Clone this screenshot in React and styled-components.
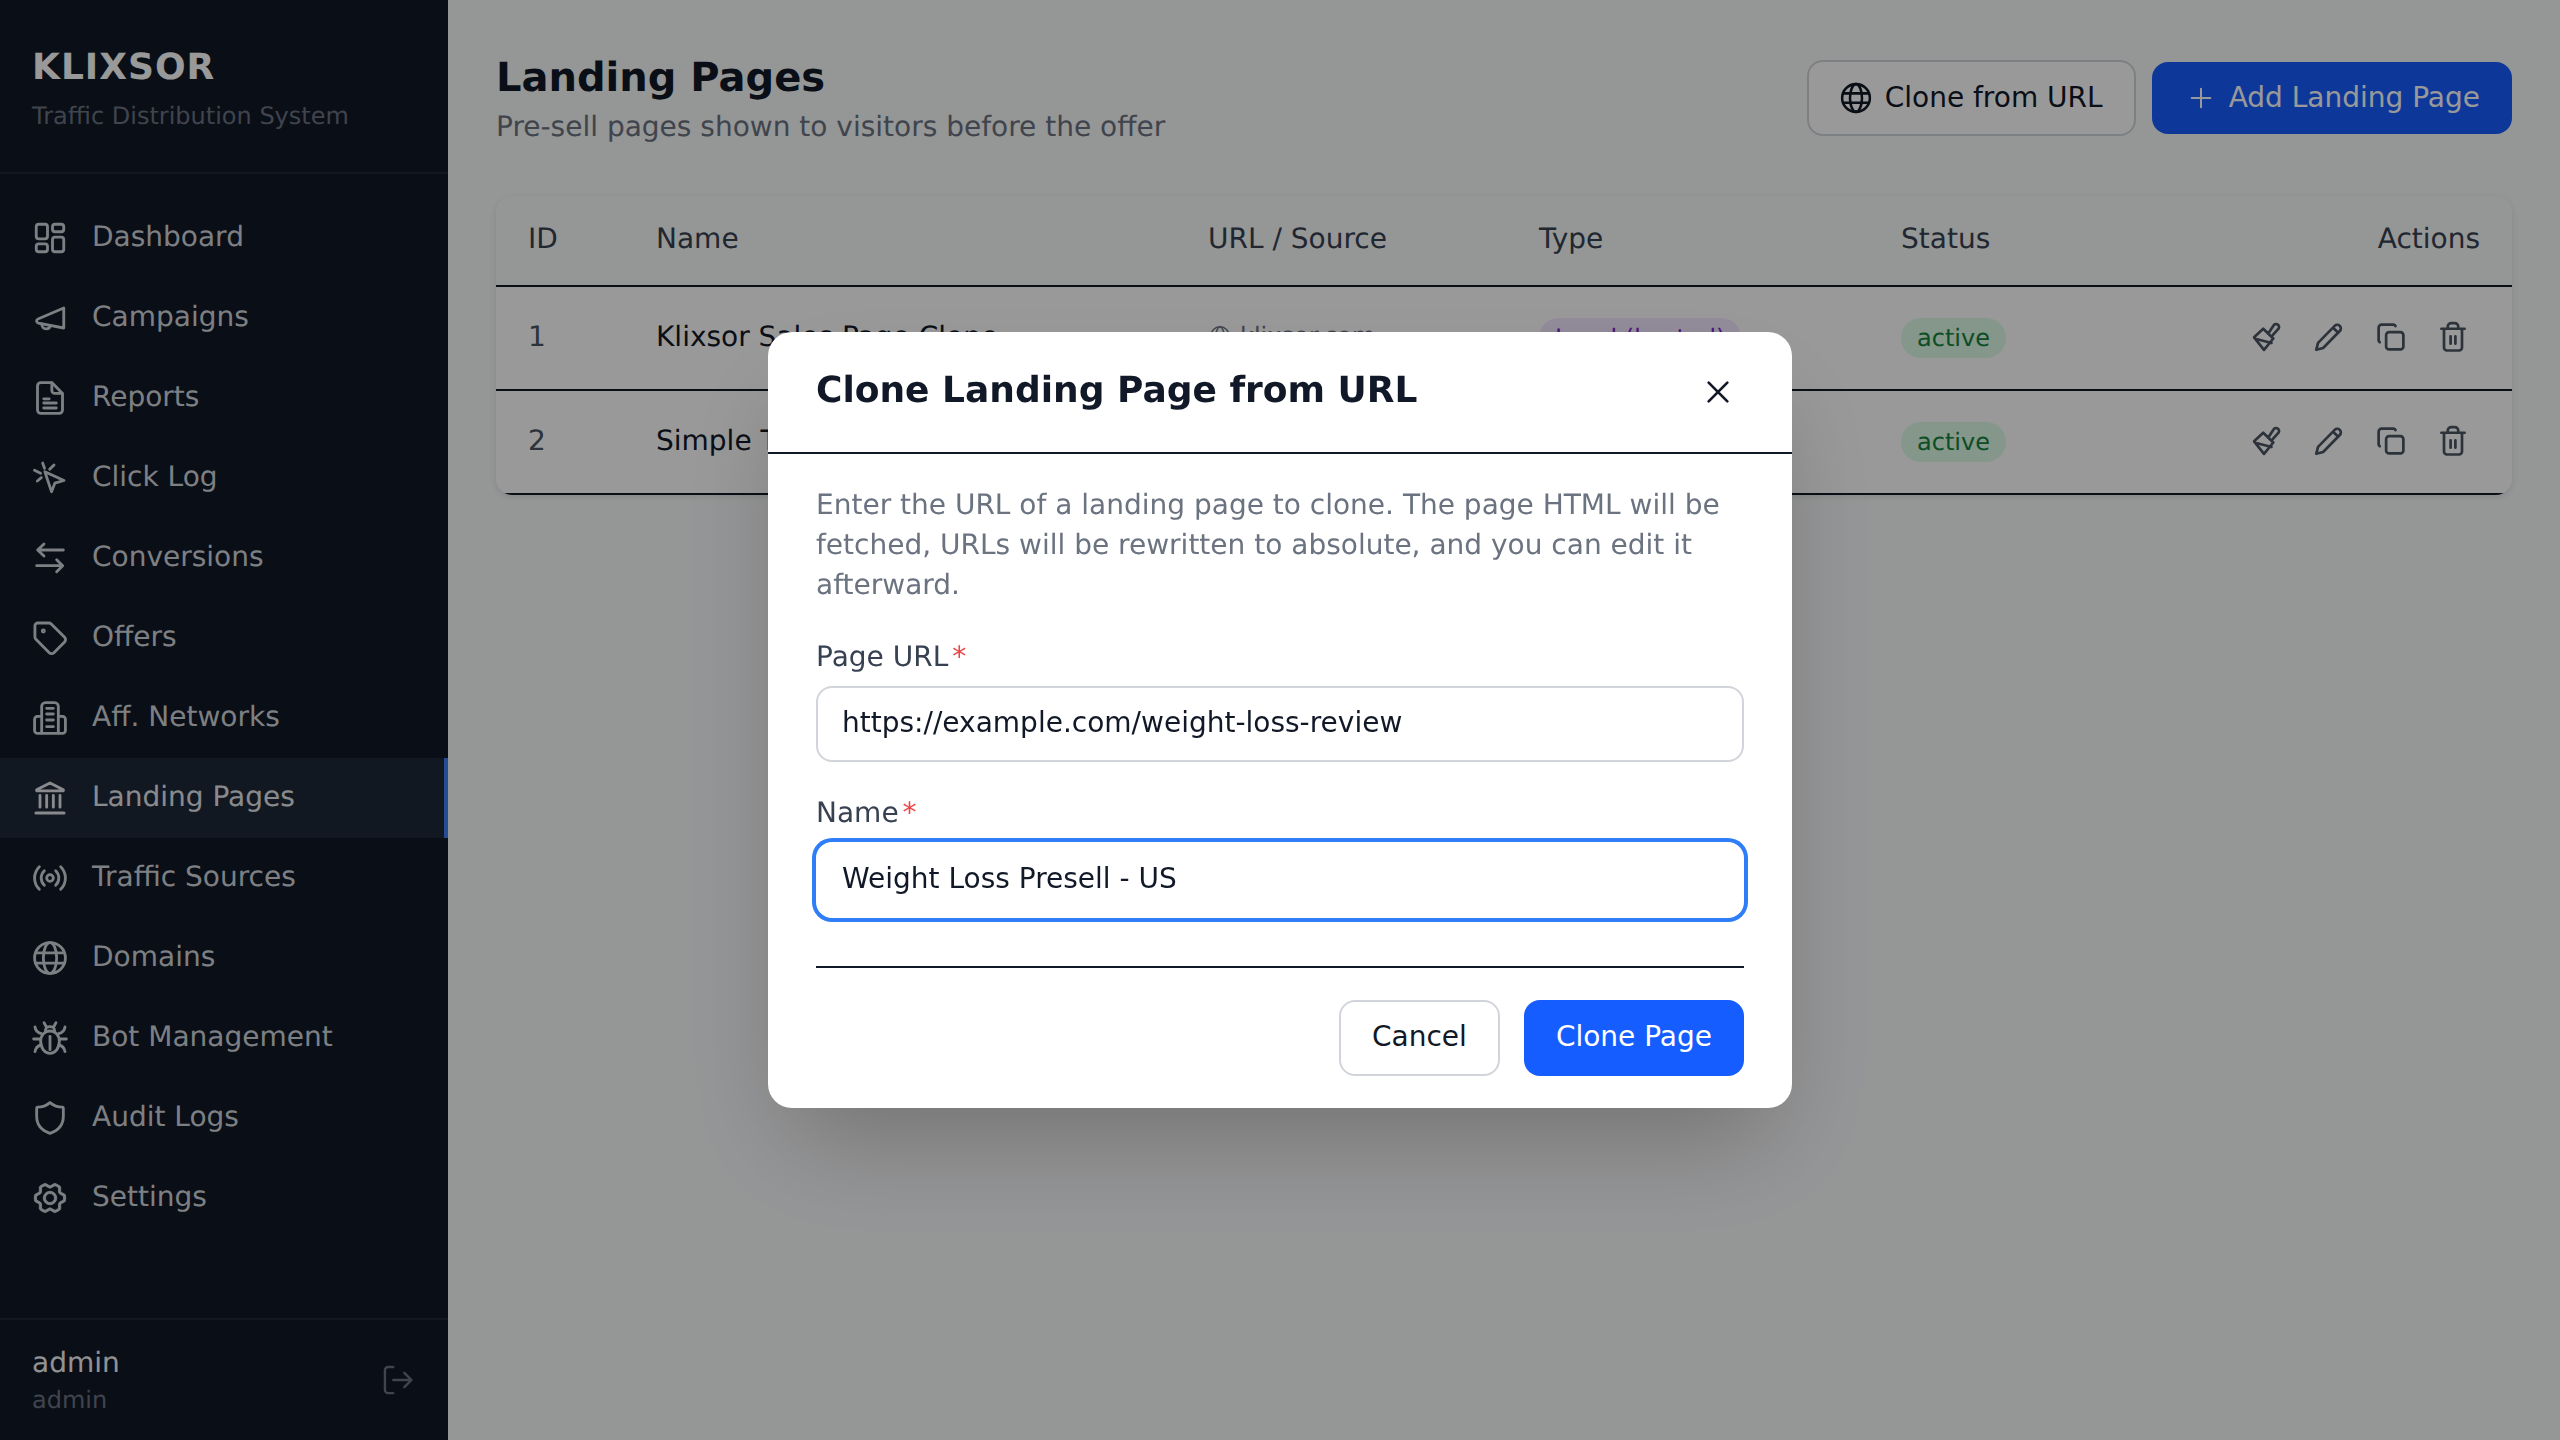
import styled, { createGlobalStyle } from "styled-components";
import { PiGearSix } from "react-icons/pi";

const GlobalStyle = createGlobalStyle`
  html, body {
    margin: 0;
    padding: 0;
    height: 100%;
    background: #f9fafb;
  }
  body {
    font-family: "DejaVu Sans", "Liberation Sans", sans-serif;
    font-size: 28px;
    text-rendering: geometricPrecision;
    color: #111827;
  }
  * {
    box-sizing: border-box;
  }
`;

// icons are drawn on a 24 unit grid, stroke only
const Glyph = styled.svg`
  width: ${(p) => p.$size || 40}px;
  height: ${(p) => p.$size || 40}px;
  flex: none;
  fill: none;
  stroke: currentColor;
  stroke-width: ${(p) => p.$stroke || 1.7};
  stroke-linecap: round;
  stroke-linejoin: round;
`;

const Icon = ({ name, size, stroke }) => (
  <Glyph viewBox="0 0 24 24" $size={size} $stroke={stroke}>
    {paths[name]}
  </Glyph>
);

const paths = {
  board: (
    <>
      <rect x="3.75" y="3.75" width="6.75" height="8.75" rx="1.5" />
      <rect x="13.5" y="3.75" width="6.75" height="4.5" rx="1.5" />
      <rect x="3.75" y="15.5" width="6.75" height="4.75" rx="1.5" />
      <rect x="13.5" y="11.5" width="6.75" height="8.75" rx="1.5" />
    </>
  ),
  megaphone: (
    <>
      <path d="M20.25 6v12L5 15.1c-1.3-.3-1.4-2-.2-2.5z" />
      <path d="M7 15.6c.1 1.7 1.2 2.9 2.7 2.9 1.3 0 2.3-.9 2.5-2" />
    </>
  ),
  report: (
    <>
      <path d="M6.5 2.75h6.6l6.4 6.6v9.9a2 2 0 0 1-2 2h-11a2 2 0 0 1-2-2V4.75a2 2 0 0 1 2-2z" />
      <path d="M13.1 3v4.5a1.75 1.75 0 0 0 1.75 1.75h4.4" />
      <path d="M8.25 12.5h3.25M8.25 15h7.5M8.25 18h7.5" />
    </>
  ),
  click: (
    <>
      <path d="M8.9 8.2l11.5 5.3-5.5 1.6-2 5.1z" />
      <path d="M7.6 3l1.1 3.2M14.4 4.2l-2.6 2.6M2.7 7.4l3.6 1.8M4.4 13.8l2.4-2" />
    </>
  ),
  swap: (
    <path d="M20 7.2H4.6M8.4 3.6L4.6 7.2l3.8 3.6M4 16.6h15.4M16 13l3.6 3.6-3.6 3.6" />
  ),
  tag: (
    <>
      <path d="M4.75 3h6.6a2 2 0 0 1 1.4.6l8 8a2 2 0 0 1 0 2.8l-6.4 6.4a2 2 0 0 1-2.8 0l-8-8a2 2 0 0 1-.6-1.4V4.75A1.75 1.75 0 0 1 4.75 3z" />
      <circle cx="8" cy="7.8" r=".6" />
    </>
  ),
  building: (
    <>
      <path d="M7 21V5a2.25 2.25 0 0 1 2.25-2.25h5.5A2.25 2.25 0 0 1 17 5v16" />
      <path d="M7 11H4.5a1.75 1.75 0 0 0-1.75 1.75v6.75A1.75 1.75 0 0 0 4.5 21.25h15a1.75 1.75 0 0 0 1.75-1.75v-6.75A1.75 1.75 0 0 0 19.5 11H17" />
      <path d="M10 6.2h4M10 9.6h4M10 13.2h4M10 17.2h4" />
    </>
  ),
  bank: (
    <>
      <path d="M12 3l8 4.1v.6H4v-.6z" />
      <path d="M6 10.5v7M10 10.5v7M14 10.5v7M18 10.5v7" />
      <path d="M3.6 21h16.8" strokeWidth="1.9" />
    </>
  ),
  radio: (
    <>
      <circle cx="12" cy="12" r="2" />
      <path d="M8.6 7.6C6.1 10 6.1 14 8.6 16.4M5.6 5.2C1.8 9 1.8 15 5.6 18.8M15.4 7.6c2.5 2.4 2.5 6.4 0 8.8M18.4 5.2c3.8 3.8 3.8 9.8 0 13.6" />
    </>
  ),
  globe: (
    <>
      <circle cx="12" cy="12" r="9.25" />
      <ellipse cx="12" cy="12" rx="4" ry="9.25" />
      <path d="M3.4 8.9h17.2M3.4 15.1h17.2" />
    </>
  ),
  bug: (
    <>
      <path d="M12 7.8c-3.2 0-5.6 2.6-5.6 6.2 0 4 2.4 7.2 5.6 7.2s5.6-3.2 5.6-7.2c0-3.6-2.4-6.2-5.6-6.2z" />
      <path d="M12 11v8" />
      <path d="M8.4 2.8l1.4 2.6M15.6 2.8l-1.4 2.6M9.3 7.9v-.5c0-1.3 1.2-2.2 2.7-2.2s2.7.9 2.7 2.2v.5" />
      <path d="M2.2 12.6h4.2M21.8 12.6h-4.2M3 5.4c.3 2.2 1.5 3.5 3.8 4M21 5.4c-.3 2.2-1.5 3.5-3.8 4M3 20.2c.3-2.2 1.5-3.5 3.7-4M21 20.2c-.3-2.2-1.5-3.5-3.7-4" />
    </>
  ),
  shield: (
    <path d="M12 2.75c2.2 1.85 4.7 2.75 7.4 2.75a.6.6 0 0 1 .6.6V11c0 5-2.6 8.4-8 10.2C6.6 19.4 4 16 4 11V6.1a.6.6 0 0 1 .6-.6C7.3 5.5 9.8 4.6 12 2.75z" />
  ),
  logout: (
    <path d="M9 20.25H5.75a2 2 0 0 1-2-2V5.75a2 2 0 0 1 2-2H9M16 16.5l4.5-4.5L16 7.5M20.5 12H9" />
  ),
  plus: <path d="M12 5v14M5 12h14" />,
  close: <path d="M5 5l14 14M19 5L5 19" />,
  brush: (
    <>
      <path d="M9.5 6.5l-6.1 5.7 6.6 8.4 6.2-7.6z" />
      <path d="M5.5 13.5l9.5 2.5" />
      <path d="M13.5 8.6l3-4.4a1.8 1.8 0 0 1 3.2 2.2l-3.9 4.3" />
    </>
  ),
  pencil: (
    <path d="M3.5 20.5l1.2-4.6L15.8 4.6a2.4 2.4 0 0 1 3.4 3.4L8.1 19.3zM14.9 6l3.1 3" />
  ),
  copy: (
    <>
      <rect x="8.75" y="8.75" width="11.5" height="11.5" rx="2" />
      <path d="M4.5 15.5a1.75 1.75 0 0 1-.75-1.5V5.75a2 2 0 0 1 2-2h7.75a1.75 1.75 0 0 1 1.5.9" />
    </>
  ),
  trash: (
    <path d="M4.25 6.5h15.5M6 6.5V19a2 2 0 0 0 2 2h8a2 2 0 0 0 2-2V6.5M8.5 6.5V5a2.25 2.25 0 0 1 2.25-2.25h2.5A2.25 2.25 0 0 1 15.5 5v1.5M10.4 11.5v5M13.6 11.5v5" />
  ),
};

const NAV = [
  { label: "Dashboard", icon: "board" },
  { label: "Campaigns", icon: "megaphone" },
  { label: "Reports", icon: "report" },
  { label: "Click Log", icon: "click" },
  { label: "Conversions", icon: "swap" },
  { label: "Offers", icon: "tag" },
  { label: "Aff. Networks", icon: "building" },
  { label: "Landing Pages", icon: "bank", active: true },
  { label: "Traffic Sources", icon: "radio" },
  { label: "Domains", icon: "globe" },
  { label: "Bot Management", icon: "bug" },
  { label: "Audit Logs", icon: "shield" },
  { label: "Settings", icon: "gear" },
];

const ROWS = [
  { id: 1, name: "Klixsor Sales Page Clone", url: "klixsor.com", type: "Local (hosted)" },
  { id: 2, name: "Simple Test Page", url: "klixsor.com", type: "Local (hosted)" },
];

export default function App() {
  return (
    <>
      <GlobalStyle />
      <Shell>
        <Sidebar>
          <Brand>
            <BrandName>KLIXSOR</BrandName>
            <BrandSub>Traffic Distribution System</BrandSub>
          </Brand>
          <Nav>
            {NAV.map((item) => (
              <NavItem key={item.label} $active={item.active}>
                {item.icon === "gear" ? <GearIcon /> : <Icon name={item.icon} />}
                <NavLabel>{item.label}</NavLabel>
              </NavItem>
            ))}
          </Nav>
          <UserBar>
            <div>
              <UserName>admin</UserName>
              <UserRole>admin</UserRole>
            </div>
            <LogoutButton>
              <Icon name="logout" size={38} stroke={1.5} />
            </LogoutButton>
          </UserBar>
        </Sidebar>

        <Main>
          <PageHeader>
            <div>
              <PageTitle>Landing Pages</PageTitle>
              <PageSub>Pre-sell pages shown to visitors before the offer</PageSub>
            </div>
            <HeaderActions>
              <OutlineButton>
                <Icon name="globe" size={36} />
                Clone from URL
              </OutlineButton>
              <PrimaryButton>
                <Icon name="plus" size={32} stroke={1.5} />
                Add Landing Page
              </PrimaryButton>
            </HeaderActions>
          </PageHeader>

          <Card>
            <Table>
              <thead>
                <tr>
                  <Th $w={128}>ID</Th>
                  <Th $w={552}>Name</Th>
                  <Th $w={331}>URL / Source</Th>
                  <Th $w={362}>Type</Th>
                  <Th $w={300}>Status</Th>
                  <Th $right>Actions</Th>
                </tr>
              </thead>
              <tbody>
                {ROWS.map((row) => (
                  <tr key={row.id}>
                    <IdCell>{row.id}</IdCell>
                    <TextCell>{row.name}</TextCell>
                    <Td>
                      <UrlLink>
                        <Icon name="globe" size={24} stroke={1.5} />
                        {row.url}
                      </UrlLink>
                    </Td>
                    <Td>
                      <Badge $kind="purple">{row.type}</Badge>
                    </Td>
                    <Td>
                      <Badge $kind="green">active</Badge>
                    </Td>
                    <TextCell>
                      <RowActions>
                        {["brush", "pencil", "copy", "trash"].map((name) => (
                          <ActionButton key={name}>
                            <Icon name={name} size={36} stroke={1.8} />
                          </ActionButton>
                        ))}
                      </RowActions>
                    </TextCell>
                  </tr>
                ))}
              </tbody>
            </Table>
          </Card>
        </Main>
      </Shell>

      <Overlay>
        <Modal>
          <ModalHeader>
            <ModalTitle>Clone Landing Page from URL</ModalTitle>
            <CloseButton>
              <Icon name="close" size={32} stroke={2} />
            </CloseButton>
          </ModalHeader>
          <ModalBody>
            <Hint>
              Enter the URL of a landing page to clone. The page HTML will be
              fetched, URLs will be rewritten to absolute, and you can edit it
              afterward.
            </Hint>
            <Field>
              <Label>
                Page URL<Req>*</Req>
              </Label>
              <TextInput readOnly value="https://example.com/weight-loss-review" />
            </Field>
            <Field>
              <Label>
                Name<Req>*</Req>
              </Label>
              <TextInput $focused readOnly value="Weight Loss Presell - US" />
            </Field>
            <ModalFooter>
              <CancelButton>Cancel</CancelButton>
              <SubmitButton>Clone Page</SubmitButton>
            </ModalFooter>
          </ModalBody>
        </Modal>
      </Overlay>
    </>
  );
}

const GearIcon = styled(PiGearSix)`
  width: 36px;
  height: 36px;
  margin: 0 2px;
  flex: none;
  stroke-width: 6px;
`;

const Shell = styled.div`
  display: flex;
  min-height: 100vh;
`;

const Sidebar = styled.aside`
  width: 448px;
  flex: none;
  height: 100vh;
  background: #111827;
  display: flex;
  flex-direction: column;
`;

const Brand = styled.div`
  padding: 40px 32px 39px;
  border-bottom: 2px solid #1f2937;
`;

const BrandName = styled.div`
  font-size: 36px;
  line-height: 56px;
  font-weight: 700;
  letter-spacing: 1px;
  color: #fff;
`;

const BrandSub = styled.div`
  margin-top: 3px;
  font-size: 24px;
  line-height: 34px;
  color: #6b7280;
`;

const Nav = styled.nav`
  flex: 1;
  padding-top: 24px;
`;

const NavItem = styled.a`
  height: 80px;
  padding-left: 30px;
  display: flex;
  align-items: center;
  gap: 22px;
  color: ${(p) => (p.$active ? "#e5e7eb" : "#d1d5db")};
  background: ${(p) => (p.$active ? "#1f2937" : "transparent")};
  border-right: 4px solid ${(p) => (p.$active ? "#3b82f6" : "transparent")};
`;

const NavLabel = styled.span`
  padding-bottom: 3px;
`;

const UserBar = styled.div`
  border-top: 2px solid #1f2937;
  padding: 24px 32px;
  display: flex;
  align-items: center;
  justify-content: space-between;
`;

const UserName = styled.div`
  line-height: 38px;
  margin-bottom: 2px;
  color: #f3f4f6;
`;

const UserRole = styled.div`
  font-size: 24px;
  line-height: 32px;
  color: #6b7280;
`;

const LogoutButton = styled.button`
  border: 0;
  padding: 0;
  margin-right: -1px;
  background: none;
  display: flex;
  color: #6b7280;
`;

const Main = styled.main`
  flex: 1;
  min-width: 0;
  padding: 48px;
`;

const PageHeader = styled.header`
  display: flex;
  align-items: center;
  justify-content: space-between;
  margin-bottom: 49px;
`;

const PageTitle = styled.h1`
  margin: 0;
  font-size: 40px;
  line-height: 60px;
  font-weight: 700;
`;

const PageSub = styled.p`
  margin: -1px 0 0;
  line-height: 40px;
  color: #6b7280;
`;

const HeaderActions = styled.div`
  display: flex;
  align-items: center;
  gap: 16px;
`;

const OutlineButton = styled.button`
  height: 76px;
  padding: 0 31px 0 29px;
  border: 2px solid #d1d5db;
  border-radius: 16px;
  background: #fff;
  color: #111827;
  font: inherit;
  display: flex;
  align-items: center;
  gap: 11px;
`;

const PrimaryButton = styled.button`
  height: 72px;
  padding: 0 32px 0 33px;
  border: 0;
  border-radius: 16px;
  background: #165dff;
  color: #fff;
  font: inherit;
  display: flex;
  align-items: center;
  gap: 12px;
`;

const Card = styled.section`
  background: #fff;
  border-radius: 16px;
  overflow: hidden;
  box-shadow: 0 2px 6px rgba(0, 0, 0, 0.1);
`;

const Table = styled.table`
  width: 100%;
  table-layout: fixed;
  border-collapse: collapse;

  tbody tr {
    height: 104px;
    border-bottom: 2px solid #111827;
  }
`;

const Th = styled.th`
  height: 90px;
  width: ${(p) => (p.$w ? `${p.$w}px` : "auto")};
  padding: 0 32px 5px;
  background: #f9fafb;
  border-bottom: 2px solid #111827;
  font-weight: 400;
  color: #374151;
  text-align: ${(p) => (p.$right ? "right" : "left")};
`;

const Td = styled.td`
  padding: 0 32px;
  white-space: nowrap;
`;

const TextCell = styled(Td)`
  padding-bottom: 3px;
`;

const IdCell = styled(TextCell)`
  color: #4b5563;
`;

const UrlLink = styled.span`
  display: inline-flex;
  align-items: center;
  gap: 8px;
  font-size: 24px;
  color: #6b7280;
`;

const Badge = styled.span`
  display: inline-block;
  padding: 0 16px;
  font-size: 24px;
  line-height: 40px;
  border-radius: 20px;
  background: ${(p) => (p.$kind === "purple" ? "#f3e8ff" : "#dcfce7")};
  color: ${(p) => (p.$kind === "purple" ? "#7e22ce" : "#15803d")};
`;

const RowActions = styled.div`
  display: flex;
  justify-content: flex-end;
  gap: 10px;
  margin-right: 1px;
`;

const ActionButton = styled.button`
  width: 52px;
  height: 52px;
  border: 0;
  background: none;
  padding: 8px;
  color: #4b5563;
  display: flex;
`;

const Overlay = styled.div`
  position: fixed;
  inset: 0;
  background: rgba(0, 0, 0, 0.4);
  display: flex;
  align-items: center;
  justify-content: center;
`;

const Modal = styled.div`
  width: 1024px;
  height: 776px;
  background: #fff;
  border-radius: 24px;
  box-shadow: 0 50px 100px -24px rgba(0, 0, 0, 0.25);
`;

const ModalHeader = styled.div`
  height: 122px;
  padding: 0 48px;
  border-bottom: 2px solid #111827;
  display: flex;
  align-items: center;
  justify-content: space-between;
`;

const ModalTitle = styled.h2`
  margin: 0 0 4px;
  font-size: 36px;
  font-weight: 700;
  color: #111827;
`;

const CloseButton = styled.button`
  border: 0;
  padding: 0;
  background: none;
  display: flex;
  color: #111827;
  margin-right: 10px;
`;

const ModalBody = styled.div`
  padding: 31px 48px 32px;
`;

const Hint = styled.p`
  margin: 0 0 32px;
  line-height: 40px;
  color: #6b7280;
`;

const Field = styled.div`
  margin-bottom: 31px;
`;

const Label = styled.label`
  display: block;
  line-height: 40px;
  margin-bottom: 9px;
  color: #374151;
`;

const Req = styled.span`
  margin-left: 4px;
  color: #ef4444;
`;

const TextInput = styled.input`
  display: block;
  width: 100%;
  height: 76px;
  padding: 0 24px 3px;
  border: 2px solid ${(p) => (p.$focused ? "#fff" : "#d1d5db")};
  border-radius: 16px;
  font: inherit;
  color: #111827;
  outline: none;
  box-shadow: ${(p) => (p.$focused ? "0 0 0 4px #2e7ef8" : "none")};
`;

const ModalFooter = styled.div`
  margin-top: 48px;
  padding-top: 32px;
  border-top: 2px solid #111827;
  display: flex;
  justify-content: flex-end;
  gap: 24px;
`;

const CancelButton = styled.button`
  height: 76px;
  padding: 0 31px 3px;
  border: 2px solid #d1d5db;
  border-radius: 16px;
  background: #fff;
  color: #111827;
  font: inherit;
`;

const SubmitButton = styled.button`
  height: 76px;
  padding: 0 32px 3px;
  border: 0;
  border-radius: 16px;
  background: #165dff;
  color: #fff;
  font: inherit;
`;
